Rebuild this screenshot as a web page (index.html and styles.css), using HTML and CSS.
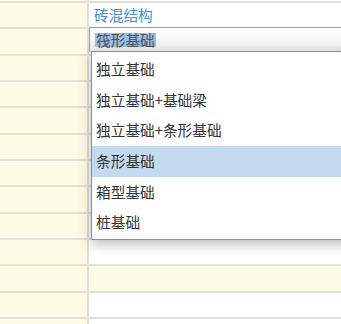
FILE: index.html
```html
<!DOCTYPE html>
<html>
<head>
<meta charset="utf-8">
<link rel="stylesheet" href="styles.css">
</head>
<body>
<div class="grid">
  <div class="row row-cut"><div class="key"></div><div class="val"></div></div>
  <div class="row"><div class="key"></div><div class="val link">砖混结构</div></div>
  <div class="row"><div class="key"></div><div class="val"></div></div>
  <div class="row"><div class="key"></div><div class="val"></div></div>
  <div class="row"><div class="key"></div><div class="val"></div></div>
  <div class="row"><div class="key"></div><div class="val"></div></div>
  <div class="row"><div class="key"></div><div class="val"></div></div>
  <div class="row"><div class="key"></div><div class="val"></div></div>
  <div class="row"><div class="key"></div><div class="val"></div></div>
  <div class="row"><div class="key"></div><div class="val"></div></div>
  <div class="row"><div class="key"></div><div class="val"></div></div>
  <div class="row"><div class="key"></div><div class="val yellow"></div></div>
  <div class="row"><div class="key"></div><div class="val"></div></div>
  <div class="row"><div class="key"></div><div class="val"></div></div>

  <div class="editor"><span class="sel">筏形基础</span></div>
  <ul class="dropdown">
    <li>独立基础</li>
    <li>独立基础+基础梁</li>
    <li>独立基础+条形基础</li>
    <li class="active">条形基础</li>
    <li>箱型基础</li>
    <li>桩基础</li>
  </ul>
</div>
</body>
</html>
```
FILE: styles.css
```css
html, body {
  margin: 0;
  padding: 0;
  background: #fff;
  overflow: hidden;
}
body {
  font-family: "Noto Sans CJK SC", "Noto Sans", sans-serif;
  font-size: 14.7px;
  color: #333;
}
.grid {
  position: relative;
  width: 341px;
  height: 324px;
  overflow: hidden;
}
.row {
  display: flex;
  height: 26.333px;
  box-sizing: border-box;
  border-bottom: 2px solid #e1e0dc;
}
.row-cut {
  height: 3px;
}
.key {
  width: 87px;
  flex: none;
  background: #fefbe5;
  border-right: 2px solid #e1e0dc;
}
.val {
  flex: 1;
  background: #fff;
  padding-left: 5px;
  display: flex;
  align-items: center;
  line-height: 1;
}
.val.yellow {
  background: #fefbe5;
}
.link {
  color: #3f8fe4;
}
.editor {
  position: absolute;
  left: 89px;
  top: 27px;
  width: 270px;
  height: 25px;
  box-sizing: border-box;
  border: 1px solid #6aa8ea;
  border-right: none;
  border-bottom: none;
  background: linear-gradient(#ffffff, #ececec);
  display: flex;
  align-items: center;
  padding-left: 5px;
  line-height: 1;
}
.sel {
  background: #9ebde6;
  color: #505050;
  padding: 0 1px;
  height: 14px;
  line-height: 14px;
}
.dropdown {
  position: absolute;
  left: 91px;
  top: 51px;
  width: 270px;
  height: 189px;
  box-sizing: border-box;
  margin: 0;
  padding: 2px 0 0;
  list-style: none;
  background: #fff;
  border: 1px solid #3ba7dc;
  border-right: none;
  box-shadow: 0 4px 12px rgba(0, 0, 0, 0.28);
}
.dropdown li {
  height: 30.7px;
  padding-left: 4px;
  display: flex;
  align-items: center;
  color: #333;
  line-height: 1;
}
.dropdown li.active {
  background: #c4daf1;
}
```
